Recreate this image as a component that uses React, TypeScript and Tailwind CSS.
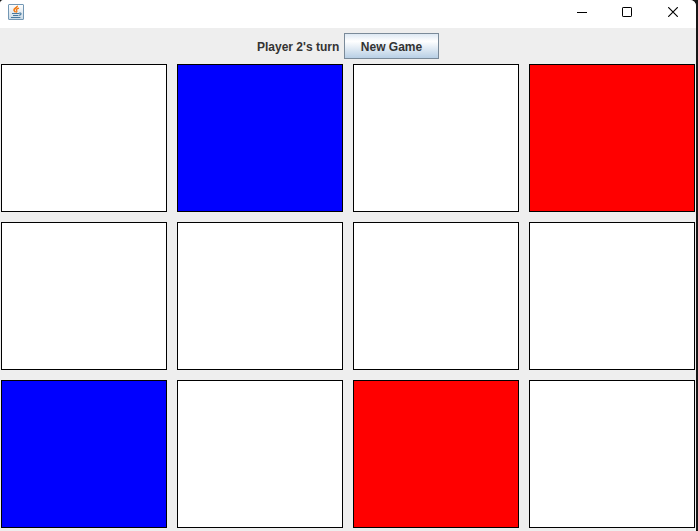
const cells: string[] = [
  'bg-white', 'bg-[#0000ff]', 'bg-white', 'bg-[#ff0000]',
  'bg-white', 'bg-white', 'bg-white', 'bg-white',
  'bg-[#0000ff]', 'bg-white', 'bg-[#ff0000]', 'bg-white',
];

function JavaIcon() {
  return (
    <svg width="16" height="16" viewBox="0 0 16 16" fill="none">
      <defs>
        <linearGradient id="tile" x1="0" y1="0" x2="0" y2="1">
          <stop offset="0" stopColor="#ffffff" />
          <stop offset="1" stopColor="#c9d9e5" />
        </linearGradient>
      </defs>
      <rect x="0.5" y="0.5" width="15" height="15" rx="0.5" fill="url(#tile)" stroke="#7397b4" />
      <path d="M9.3 1.8C9.8 3.6 5.6 4.4 6 6.2C6.2 7.1 7.2 7.4 7.4 8.4" stroke="#f27a12" strokeWidth="1.6" />
      <path d="M11 4.2C8.6 4.9 7.8 5.7 8.7 6.6C9.2 7.2 8.8 7.9 8.2 8.4" stroke="#f27a12" strokeWidth="1.3" />
      <path d="M4 9.5H11M5 11.5H10.4M3 13.5H12.4" stroke="#47799f" strokeWidth="1.2" />
      <path d="M11 9.2C13.6 8.4 13.9 10.6 11.2 11.4" stroke="#47799f" strokeWidth="1.1" />
    </svg>
  );
}

function TitleBar() {
  return (
    <header className="flex h-7 items-start justify-between bg-white pl-2">
      <div className="pt-1">
        <JavaIcon />
      </div>
      <div className="flex">
        <button aria-label="Minimize" className="flex h-6 w-11 items-center justify-center">
          <svg width="10" height="10" viewBox="0 0 10 10">
            <path d="M0 5.5H10" stroke="#000" />
          </svg>
        </button>
        <button aria-label="Maximize" className="flex h-6 w-[46px] items-center justify-center">
          <svg width="10" height="10" viewBox="0 0 10 10" fill="none">
            <rect x="0.5" y="0.5" width="9" height="9" rx="0.6" stroke="#000" />
          </svg>
        </button>
        <button aria-label="Close" className="flex h-6 w-[46px] items-center justify-center">
          <svg width="10" height="10" viewBox="0 0 10 10">
            <path d="M0.2 0.2L9.8 9.8M9.8 0.2L0.2 9.8" stroke="#000" strokeWidth="1.15" />
          </svg>
        </button>
      </div>
    </header>
  );
}

export default function App() {
  return (
    <div className="h-[531px] w-[698px] overflow-hidden bg-[#161616] pr-0.5 font-['Liberation_Sans',Arial,sans-serif]">
      <div className="flex h-full flex-col overflow-hidden rounded-tl-[4px] rounded-tr-[6px] bg-[#eeeeee]">
        <TitleBar />
        <div className="flex h-9 items-start justify-center gap-[5px] pt-[5px]">
          <span className="w-[82px] whitespace-nowrap text-[12px] leading-[29px] font-bold text-[#333333]">
            Player 2's turn
          </span>
          <button className="h-[26px] w-[95px] border border-[#7a8a99] bg-linear-to-b from-[#dde8f3] via-white via-30% to-[#b8cfe5] pt-0.5 text-[12px] leading-[22px] font-bold whitespace-nowrap text-[#333333]">
            New Game
          </button>
        </div>
        <main className="grid grid-cols-4 gap-2.5 px-px">
          {cells.map((color, i) => (
            <div key={i} className={`h-[148px] border border-black ${color}`} />
          ))}
        </main>
      </div>
    </div>
  );
}
